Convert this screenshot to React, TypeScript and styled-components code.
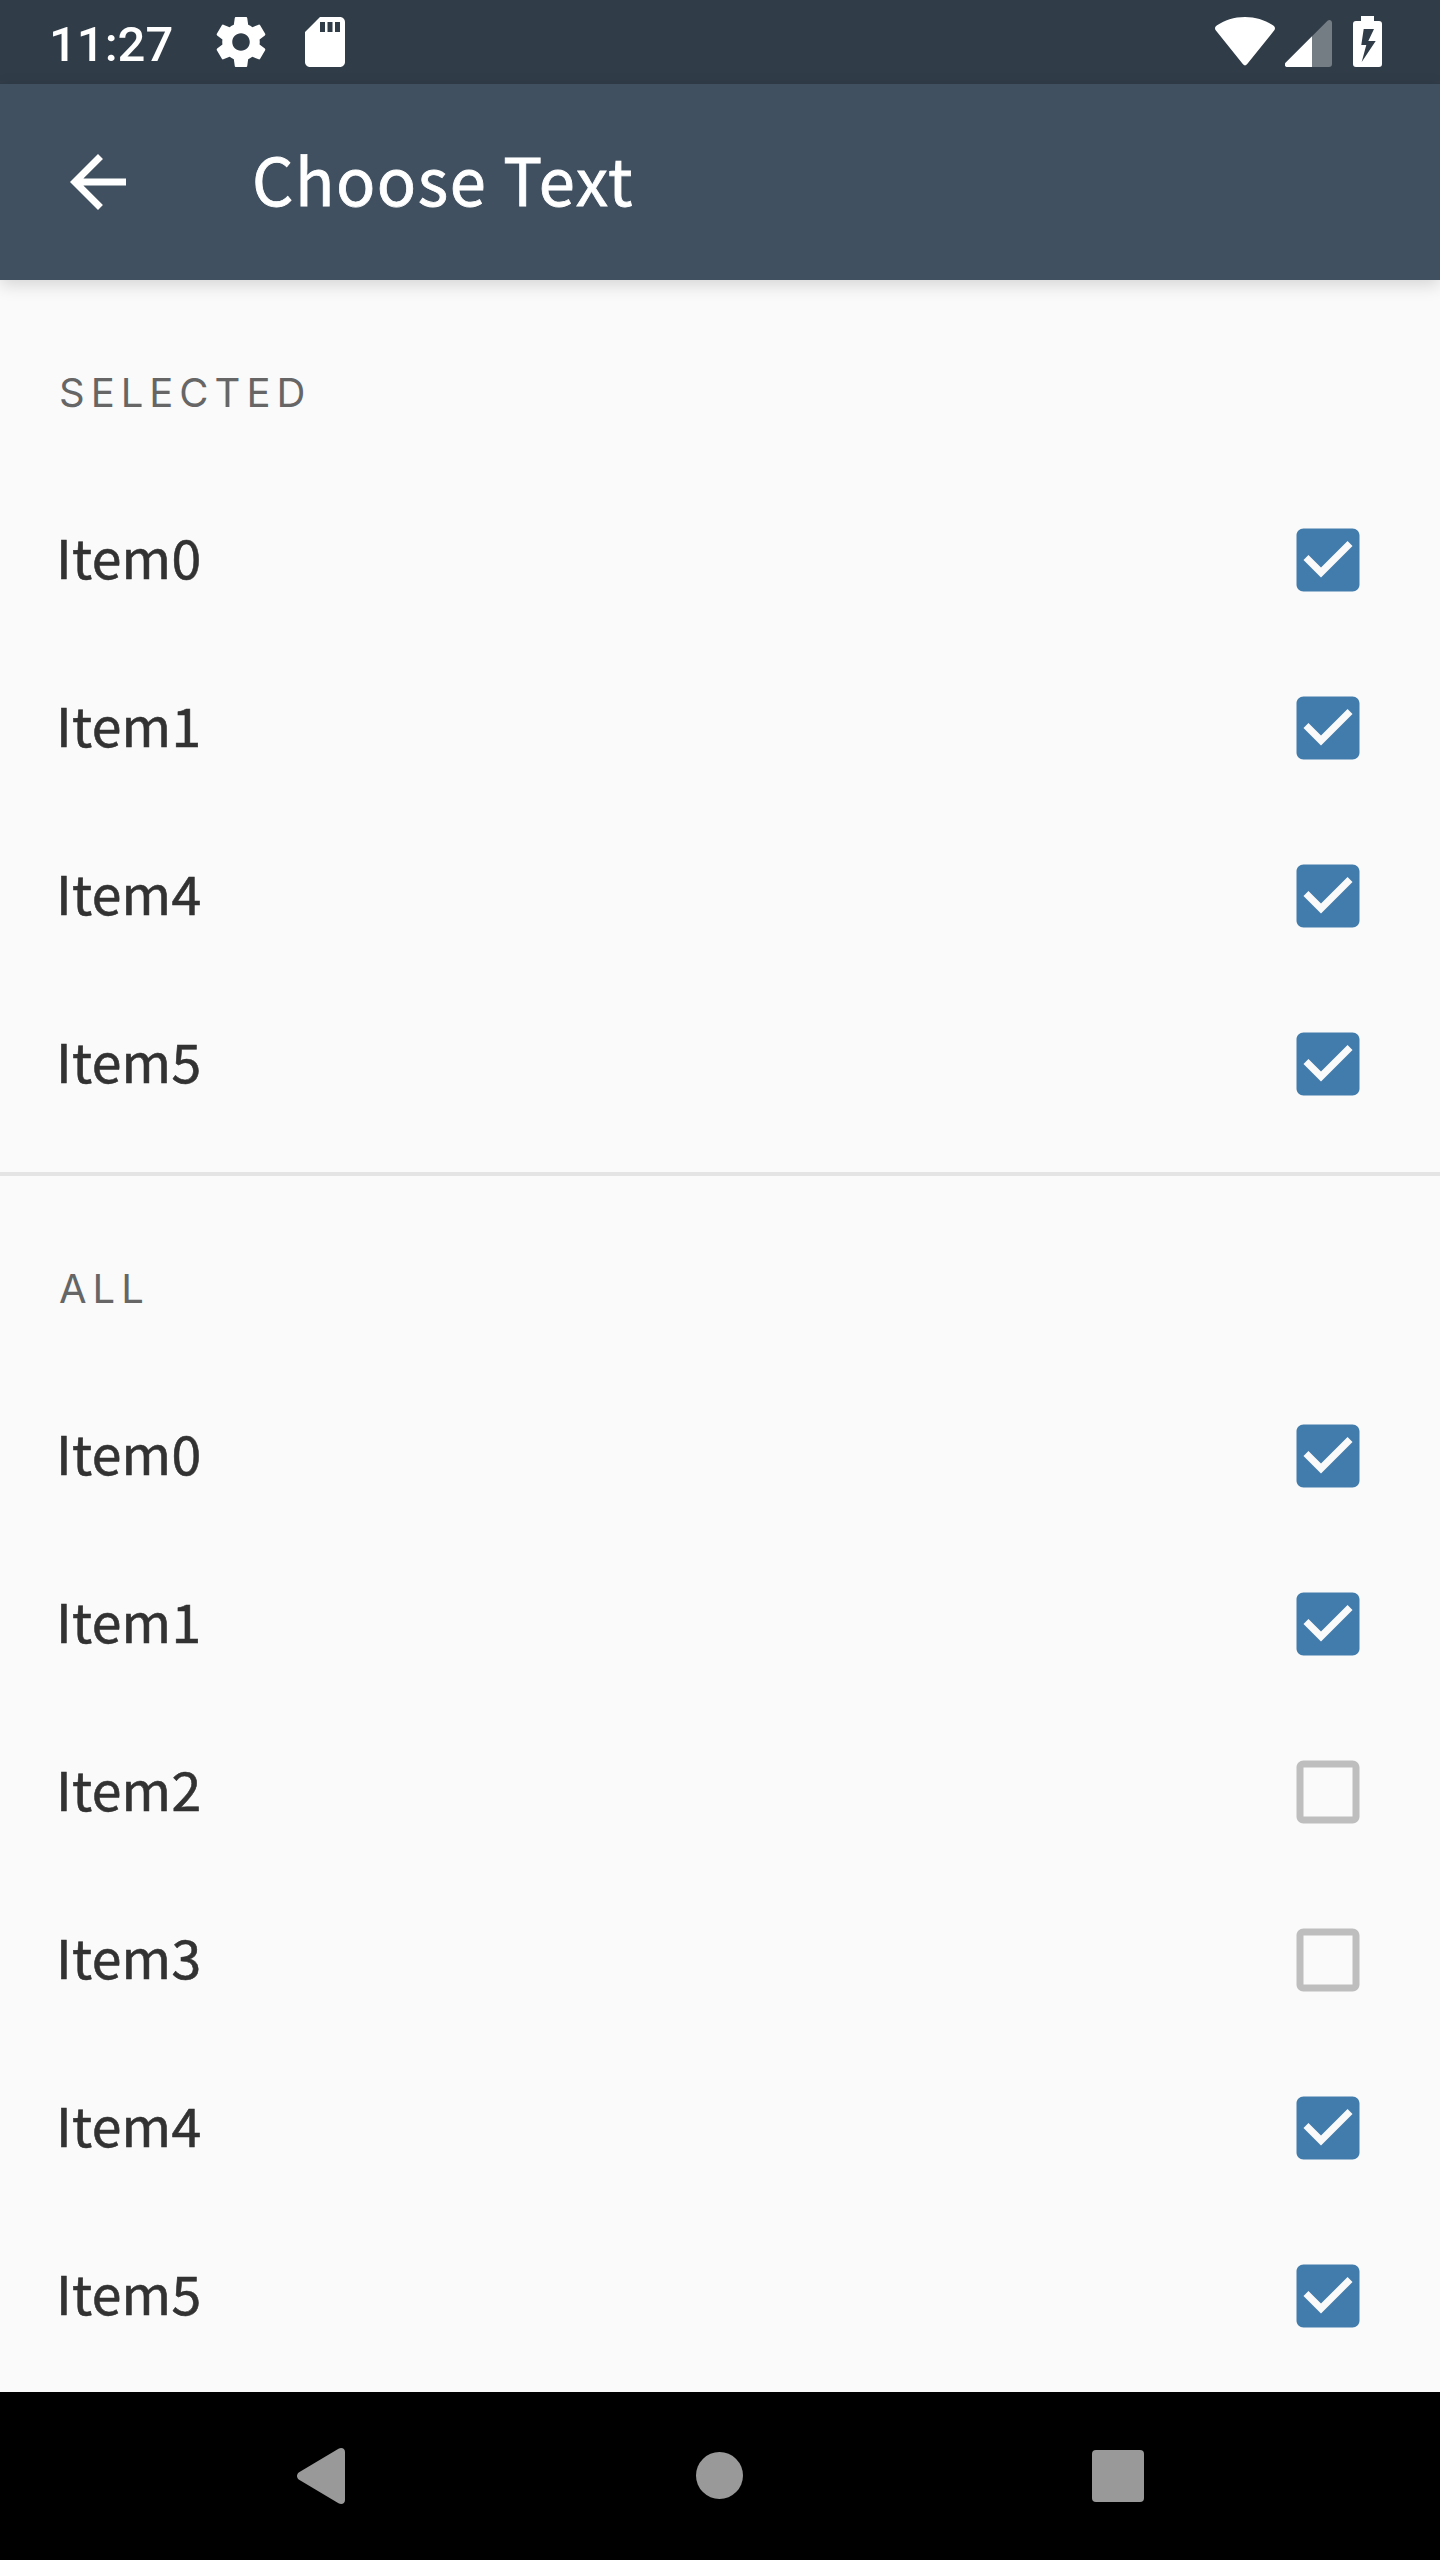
import React, { useState } from 'react';
import styled, { createGlobalStyle } from 'styled-components';

const GlobalStyle = createGlobalStyle`
  *, *::before, *::after { box-sizing: border-box; }
  body { margin: 0; background: #fafafa; }
`;

const Screen = styled.div`
  display: flex;
  flex-direction: column;
  width: 1440px;
  height: 2560px;
  overflow: hidden;
  background: #fafafa;
  color: #323232;
  font-family: 'Noto Sans CJK SC', 'Noto Sans', sans-serif;
`;

const StatusBar = styled.header`
  display: flex;
  align-items: center;
  justify-content: space-between;
  flex: none;
  height: 84px;
  padding: 0 50px 0 49px;
  background: #303c48;
  color: #ffffff;
`;

const StatusGroup = styled.div`
  display: flex;
  align-items: center;
  height: 100%;
`;

const Clock = styled.time`
  width: 162px;
  padding-top: 5px;
  font: 500 49px/60px Roboto, sans-serif;
`;

const Icon = styled.svg<{ $w: number; $h?: number; $gap?: number }>`
  display: block;
  flex: none;
  width: ${(p) => p.$w}px;
  height: ${(p) => p.$h ?? p.$w}px;
  margin-left: ${(p) => p.$gap ?? 0}px;
`;

const AppBar = styled.div`
  display: flex;
  align-items: center;
  flex: none;
  height: 196px;
  padding-left: 56px;
  background: #405060;
  box-shadow: 0 5px 16px rgba(0, 0, 0, 0.15);
  z-index: 1;
`;

const BackButton = styled.button`
  width: 84px;
  height: 84px;
  padding: 0;
  border: 0;
  background: none;
  color: #ffffff;
`;

const Title = styled.h1`
  margin: 0 0 0 112px;
  padding-bottom: 9px;
  color: #ffffff;
  font-size: 65px;
  font-weight: 400;
  line-height: 94px;
  letter-spacing: 1.5px;
  -webkit-text-stroke: 0.8px currentColor;
`;

const Content = styled.main`
  flex: 1;
  min-height: 0;
  overflow: hidden;
`;

const Section = styled.section`
  & + & { border-top: 4px solid #e4e4e4; }
`;

const SectionTitle = styled.h2`
  display: flex;
  align-items: center;
  height: 196px;
  margin: 0;
  padding: 29px 59px 0;
  color: #666666;
  font-family: Inter, sans-serif;
  font-size: 40px;
  font-weight: 400;
  letter-spacing: 6px;
`;

const List = styled.ul`
  margin: 0;
  padding: 0 0 24px;
  list-style: none;
`;

const Row = styled.li`
  display: flex;
  align-items: center;
  justify-content: space-between;
  height: 168px;
  padding: 0 70px 0 56px;
`;

const RowLabel = styled.span`
  padding-bottom: 9px;
  font-size: 53.5px;
  line-height: 78px;
  letter-spacing: 0.3px;
  -webkit-text-stroke: 0.6px currentColor;
`;

const CheckButton = styled.button<{ $checked: boolean }>`
  width: 84px;
  height: 84px;
  padding: 0;
  border: 0;
  background: none;
  color: ${(p) => (p.$checked ? '#427cac' : '#bebebe')};
`;

const NavBar = styled.nav`
  display: flex;
  align-items: center;
  justify-content: space-between;
  flex: none;
  height: 168px;
  padding: 0 280px;
  background: #000000;
  color: #999999;
`;

const CHECKED =
  'M19 3H5c-1.11 0-2 .9-2 2v14c0 1.1.89 2 2 2h14c1.11 0 2-.9 2-2V5c0-1.1-.89-2-2-2zm-9 14l-5-5 1.41-1.41L10 14.17l7.59-7.59L19 8l-9 9z';
const UNCHECKED =
  'M19 5v14H5V5h14m0-2H5c-1.1 0-2 .9-2 2v14c0 1.1.9 2 2 2h14c1.1 0 2-.9 2-2V5c0-1.1-.9-2-2-2z';
const GEAR =
  'M19.43 12.98c.04-.32.07-.64.07-.98s-.03-.66-.07-.98l2.11-1.65c.19-.15.24-.42.12-.64l-2-3.46c-.12-.22-.39-.3-.61-.22l-2.49 1c-.52-.4-1.08-.73-1.69-.98l-.38-2.65C14.46 2.18 14.25 2 14 2h-4c-.25 0-.46.18-.49.42l-.38 2.65c-.61.25-1.17.59-1.69.98l-2.49-1c-.23-.09-.49 0-.61.22l-2 3.46c-.13.22-.07.49.12.64l2.11 1.65c-.04.32-.07.65-.07.98s.03.66.07.98l-2.11 1.65c-.19.15-.24.42-.12.64l2 3.46c.12.22.39.3.61.22l2.49-1c.52.4 1.08.73 1.69.98l.38 2.65c.03.24.24.42.49.42h4c.25 0 .46-.18.49-.42l.38-2.65c.61-.25 1.17-.59 1.69-.98l2.49 1c.23.09.49 0 .61-.22l2-3.46c.12-.22.07-.49-.12-.64l-2.11-1.65zM12 15.5c-1.93 0-3.5-1.57-3.5-3.5s1.57-3.5 3.5-3.5 3.5 1.57 3.5 3.5-1.57 3.5-3.5 3.5z';

type Choice = { name: string; checked: boolean };

const initial: Choice[] = [
  { name: 'Item0', checked: true },
  { name: 'Item1', checked: true },
  { name: 'Item2', checked: false },
  { name: 'Item3', checked: false },
  { name: 'Item4', checked: true },
  { name: 'Item5', checked: true },
];

function ChoiceList({ title, items, onToggle }: { title: string; items: Choice[]; onToggle: (name: string) => void }) {
  return (
    <Section>
      <SectionTitle>{title}</SectionTitle>
      <List>
        {items.map((item) => (
          <Row key={item.name}>
            <RowLabel>{item.name}</RowLabel>
            <CheckButton
              $checked={item.checked}
              role="checkbox"
              aria-checked={item.checked}
              onClick={() => onToggle(item.name)}
            >
              <Icon $w={84} viewBox="0 0 24 24" fill="currentColor">
                <path d={item.checked ? CHECKED : UNCHECKED} />
              </Icon>
            </CheckButton>
          </Row>
        ))}
      </List>
    </Section>
  );
}

export default function App() {
  const [items, setItems] = useState(initial);
  const toggle = (name: string) =>
    setItems((list) => list.map((i) => (i.name === name ? { ...i, checked: !i.checked } : i)));

  return (
    <Screen>
      <GlobalStyle />
      <StatusBar>
        <StatusGroup>
          <Clock>11:27</Clock>
          <Icon $w={60} viewBox="0 0 24 24" fill="currentColor">
            <path d={GEAR} />
          </Icon>
          <Icon $w={60} $gap={24} viewBox="0 0 24 24" fill="currentColor">
            <path fillRule="evenodd" d="M18 2h-8L4 8v12c0 1.1.9 2 2 2h12c1.1 0 2-.9 2-2V4c0-1.1-.9-2-2-2zM10 4v4h2V4zM13 4v4h2V4zM16 4v4h2V4z" />
          </Icon>
        </StatusGroup>
        <StatusGroup>
          <Icon $w={60} $h={84} viewBox="0 0 60 84" fill="currentColor">
            <path d="M30 17c11 0 20.500 3.200 28.300 8.600 1.900 1.400 2.200 3.200.8 5L32 64.300c-1.200 1.500-2.800 1.500-4 0L.9 30.600c-1.400-1.800-1.100-3.600.8-5C9.500 20.200 19 17 30 17z" />
          </Icon>
          <Icon $w={48} $h={84} $gap={10} viewBox="0 0 48 84" fill="currentColor">
            <path opacity="0.33" d="M27 36.200L42.500 20.800c1.800-1.800 4.500-.7 4.500 2V64c0 2-1 3-3 3H27z" />
            <path d="M27 36.200V67H2.500c-2.700 0-3.600-2.600-2-4.300z" />
          </Icon>
          <Icon $w={29} $h={84} $gap={20} viewBox="0 0 29 84" fill="currentColor">
            <path fillRule="evenodd" d="M8 16h13v5h5c2 0 3 1 3 3v40c0 2-1 3-3 3H3c-2 0-3-1-3-3V24c0-2 1-3 3-3h5zM10.700 29L8.300 45h5L8.700 62 22.700 41H15.300L21 29z" />
          </Icon>
          <Icon $w={8} $h={84} viewBox="0 0 8 84" />
        </StatusGroup>
      </StatusBar>
      <AppBar>
        <BackButton aria-label="Back">
          <Icon $w={84} viewBox="0 0 24 24" fill="currentColor">
            <path d="M20 11H7.830l5.590-5.590L12 4l-8 8 8 8 1.410-1.410L7.830 13H20v-2z" />
          </Icon>
        </BackButton>
        <Title>Choose Text</Title>
      </AppBar>
      <Content>
        <ChoiceList title="SELECTED" items={items.filter((i) => i.checked)} onToggle={toggle} />
        <ChoiceList title="ALL" items={items} onToggle={toggle} />
      </Content>
      <NavBar>
        <Icon $w={80} viewBox="0 0 80 80" fill="currentColor">
          <path d="M19.500 36L58.500 12.700c3-1.800 6.500-.5 6.500 3.300V64c0 3.800-3.500 5.100-6.500 3.300L19.500 44c-3.300-2-3.300-6 0-8z" />
        </Icon>
        <Icon $w={80} viewBox="0 0 80 80" fill="currentColor">
          <circle cx="39.500" cy="39.500" r="23.500" />
        </Icon>
        <Icon $w={80} viewBox="0 0 80 80" fill="currentColor">
          <rect x="12" y="14" width="52" height="52" rx="4" />
        </Icon>
      </NavBar>
    </Screen>
  );
}
